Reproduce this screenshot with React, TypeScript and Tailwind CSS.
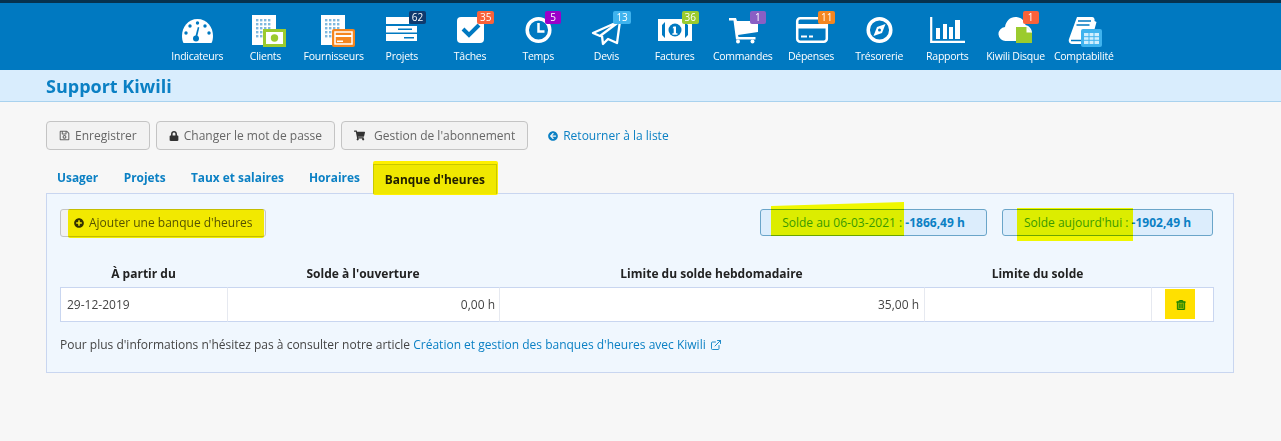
import { ReactNode } from 'react';
import { FaArrowCircleLeft, FaLock, FaPlusCircle, FaRegSave, FaShoppingCart, FaRegTrashAlt } from 'react-icons/fa';
import { ExternalLink } from 'lucide-react';

const Building = ({ children }: { children: ReactNode }) => (
  <svg width="36" height="36" viewBox="0 0 36 36" className="overflow-visible">
    <rect x="5" y="2" width="24" height="30" fill="#fff" />
    {[0, 1, 2, 3, 4].map((r) =>
      [0, 1, 2, 3].map((c) => (
        <rect key={`${r}-${c}`} x={9 + c * 4} y={6 + r * 4} width="2.4" height="2.4" fill="#7fb9df" />
      ))
    )}
    {children}
  </svg>
);

const icons: Record<string, ReactNode> = {
  gauge: (
    <svg width="36" height="36" viewBox="0 0 36 36">
      <path d="M18.500 6C9 6 3 14 3 23c0 2.500.4 5 1.500 7h28c1.100-2 1.500-4.500 1.500-7C34 14 28 6 18.500 6z" fill="#fff" />
      <g fill="#0079c1">
        <circle cx="18.500" cy="10" r="1.700" />
        <circle cx="11" cy="13" r="1.700" />
        <circle cx="26" cy="13" r="1.700" />
        <circle cx="7" cy="20" r="1.700" />
        <circle cx="30" cy="20" r="1.700" />
        <circle cx="17" cy="25.500" r="3" />
        <path d="M16 25l2.800-11 1.500.4-2.500 11z" />
      </g>
    </svg>
  ),
  clients: (
    <Building>
      <rect x="16" y="16" width="23" height="18" fill="#9bcb2e" />
      <rect x="19" y="19" width="17" height="12" fill="#fff" />
      <circle cx="27.500" cy="25" r="3.700" fill="#9bcb2e" />
    </Building>
  ),
  suppliers: (
    <Building>
      <rect x="16" y="16" width="23" height="18" rx="2" fill="#f5861f" />
      <rect x="19" y="19" width="17" height="12" fill="none" stroke="#fff" strokeWidth="1.500" />
      <rect x="19" y="22" width="17" height="2" fill="#fff" />
      <rect x="21" y="27.500" width="6" height="1.500" fill="#fff" />
    </Building>
  ),
  projects: (
    <svg width="36" height="36" viewBox="0 0 36 36">
      <path d="M2 4h23v7H2zM2 13h31v6.500H2zM2 21h31v7H2z" fill="#fff" />
      <path d="M14 15.500h14V17H14zM20 24h10v1.500H20z" fill="#0079c1" />
    </svg>
  ),
  tasks: (
    <svg width="36" height="36" viewBox="0 0 36 36">
      <rect x="5" y="4" width="27" height="26" rx="4" fill="#fff" />
      <path d="M11 16l6 6 10-10" fill="none" stroke="#0079c1" strokeWidth="4" />
    </svg>
  ),
  time: (
    <svg width="36" height="36" viewBox="0 0 36 36">
      <circle cx="18.500" cy="17" r="11.300" fill="none" stroke="#fff" strokeWidth="3.500" />
      <path d="M18.500 10v8.500h6" fill="none" stroke="#fff" strokeWidth="2.500" />
    </svg>
  ),
  quotes: (
    <svg width="36" height="36" viewBox="0 0 36 36">
      <path d="M32 8L5 20l7 3 20-15-3 22-9-4-5 5-1-8" fill="none" stroke="#fff" strokeWidth="2.300" strokeLinejoin="round" />
    </svg>
  ),
  invoices: (
    <svg width="36" height="36" viewBox="0 0 36 36">
      <path d="M1 6h34v22H1z" fill="#fff" />
      <path d="M5 12l3-3v16l-3-3zM31 12l-3-3v16l3-3z" fill="#0079c1" />
      <circle cx="18" cy="17" r="6.500" fill="#0079c1" />
      <path d="M16.500 13.500H19v6.800h1.400v1.500h-5v-1.500h1.300v-5H15.500z" fill="#fff" />
    </svg>
  ),
  orders: (
    <svg width="36" height="36" viewBox="0 0 36 36">
      <path d="M4 5h7l1 3h21v11l-20 3 .5 2h17v2.500H11L8.500 7.500H4z" fill="#fff" />
      <circle cx="13" cy="28.500" r="2" fill="#fff" />
      <circle cx="27.500" cy="28.500" r="2" fill="#fff" />
    </svg>
  ),
  expenses: (
    <svg width="36" height="36" viewBox="0 0 36 36">
      <rect x="4.200" y="5.200" width="29.600" height="23.600" rx="3" fill="none" stroke="#fff" strokeWidth="2.500" />
      <rect x="4" y="11" width="30" height="4.500" fill="#fff" />
      <path d="M8 22.500h6v2H8zM16 22.500h4v2h-4z" fill="#fff" />
    </svg>
  ),
  treasury: (
    <svg width="36" height="36" viewBox="0 0 36 36">
      <circle cx="18.500" cy="17" r="11.300" fill="none" stroke="#fff" strokeWidth="3.500" />
      <path d="M24.500 11l-3.500 9-8.500 3 3.500-9z" fill="#fff" />
      <circle cx="18.500" cy="17" r="1.500" fill="#0079c1" />
    </svg>
  ),
  reports: (
    <svg width="36" height="36" viewBox="0 0 36 36">
      <path d="M2.200 4v24.800H37" fill="none" stroke="#fff" strokeWidth="2.200" />
      <path d="M7 15h4v11H7zM14 11h4v15h-4zM20 14h4v12h-4zM26 7h5v19h-5z" fill="#fff" />
    </svg>
  ),
  drive: (
    <svg width="36" height="36" viewBox="0 0 36 36">
      <path d="M8 28a7 7 0 0 1-1-14C8 8 12 4 17.500 4c5 0 9 3 10 8 4 1 6.500 4 6.500 8s-3 8-7 8z" fill="#fff" />
      <path d="M18 14h10.500l5.500 5.500V30H18z" fill="#9bcb2e" />
      <path d="M28.500 14l5.500 5.500h-5.500z" fill="#fff" />
    </svg>
  ),
  accounting: (
    <svg width="36" height="36" viewBox="0 0 36 36" className="overflow-visible">
      <path d="M11 4h15c2 0 3 2 2.500 4l2 1-6 22H7c-3 0-5-2-4-5z" fill="#fff" />
      <path d="M12 8h13M10.500 12h13M5 27.500h11" stroke="#0079c1" strokeWidth="1.500" />
      <rect x="15" y="16" width="21" height="18" rx="2" fill="#3fb3ee" />
      <path d="M18 20h15v11H18z" fill="#cfeefe" />
      <path d="M23 20v11M28 20v11M18 23.700h15M18 27.300h15" stroke="#3fb3ee" strokeWidth="1" />
    </svg>
  ),
};

const navItems = [
  { label: 'Indicateurs', icon: 'gauge' },
  { label: 'Clients', icon: 'clients' },
  { label: 'Fournisseurs', icon: 'suppliers' },
  { label: 'Projets', icon: 'projects', badge: '62', color: 'bg-[#0f3a6e]' },
  { label: 'Tâches', icon: 'tasks', badge: '35', color: 'bg-[#f9623a]' },
  { label: 'Temps', icon: 'time', badge: '5', color: 'bg-[#9b00c9]' },
  { label: 'Devis', icon: 'quotes', badge: '13', color: 'bg-[#3fb3ee]' },
  { label: 'Factures', icon: 'invoices', badge: '36', color: 'bg-[#9bcb2e]' },
  { label: 'Commandes', icon: 'orders', badge: '1', color: 'bg-[#8a5fc4]' },
  { label: 'Dépenses', icon: 'expenses', badge: '11', color: 'bg-[#f5861f]' },
  { label: 'Trésorerie', icon: 'treasury' },
  { label: 'Rapports', icon: 'reports' },
  { label: 'Kiwili Disque', icon: 'drive', badge: '1', color: 'bg-[#f9623a]' },
  { label: 'Comptabilité', icon: 'accounting' },
];

const Highlight = ({ className }: { className: string }) => (
  <span className={`absolute mix-blend-multiply pointer-events-none ${className}`} />
);

const ActionButton = ({ icon, label }: { icon: ReactNode; label: string }) => (
  <button className="h-[29px] px-[12px] flex items-center gap-[5px] bg-[#f2f2f2] border border-[#c4c4c4] rounded-[4px] text-[12px] text-[#666]">
    {icon}
    {label}
  </button>
);

export default function App() {
  return (
    <div className="w-[1281px] h-[441px] overflow-hidden bg-[#f7f7f7] text-[12px] text-[#444] font-['Open_Sans',sans-serif]">
      {/* top navigation */}
      <div className="h-[70px] bg-[#0079c1] border-t-[3px] border-[#06324f] flex justify-center">
        {navItems.map((item) => (
          <div key={item.label} className="w-[68.2px] shrink-0 flex flex-col items-center pt-[10px] relative">
            <div className="relative h-[36px] w-[36px]">
              {icons[item.icon]}
              {item.badge && (
                <span className={`absolute top-[-2px] left-[25px] min-w-[16px] h-[13px] px-[3px] rounded-[2px] flex items-center justify-center text-[10px] text-white ${item.color}`}>
                  {item.badge}
                </span>
              )}
            </div>
            <span className="text-[10.500px] leading-[14px] text-white whitespace-nowrap tracking-[-0.25px]">{item.label}</span>
          </div>
        ))}
      </div>

      {/* page title */}
      <div className="h-[32px] bg-[#d9edfd] border-b border-[#a9d2ee] pl-[46px] flex items-center">
        <h1 className="text-[18px] leading-[32px] font-bold text-[#0b80c4]">Support Kiwili</h1>
      </div>

      <div className="px-[46px] pr-[47px] pt-[19px]">
        <div className="flex items-center gap-[6px]">
          <ActionButton icon={<FaRegSave className="text-[11px] text-[#666]" />} label="Enregistrer" />
          <ActionButton icon={<FaLock className="text-[10px] text-[#333]" />} label="Changer le mot de passe" />
          <ActionButton icon={<FaShoppingCart className="text-[11px] text-[#333] mr-[4px]" />} label="Gestion de l'abonnement" />
          <a className="ml-[14px] flex items-center gap-[5px] text-[12px] text-[#0b80c4]">
            <FaArrowCircleLeft className="text-[10px]" />
            Retourner à la liste
          </a>
        </div>

        {/* tabs */}
        <div className="mt-[13px] flex h-[30px] items-end font-bold text-[11.900px] text-[#0b80c4] relative z-10">
          <span className="h-[30px] px-[11px] flex items-center mr-[3.500px]">Usager</span>
          <span className="h-[30px] px-[11px] flex items-center mr-[3.200px]">Projets</span>
          <span className="h-[30px] px-[11px] flex items-center mr-[3px]">Taux et salaires</span>
          <span className="h-[30px] px-[11px] flex items-center mr-[2px]">Horaires</span>
          <span className="relative h-[30px] mb-[-1px] w-[124px] justify-center flex items-center bg-[#f0f7fe] border border-b-0 border-[#c9d6f0] text-[#222]">
            Banque d'heures
            <Highlight className="bg-[#fff000] left-[-1px] top-[-4px] w-[125px] h-[34px] rounded-[2px]" />
          </span>
        </div>

        {/* panel */}
        <div className="h-[180px] bg-[#f0f7fe] border border-[#c9d6f0] px-[13px] pt-[15px]">
          <div className="flex items-start">
            <button className="relative h-[28px] w-[206px] flex items-center gap-[5px] pl-[13px] bg-[#f2f2f2] border border-[#c4c4c4] rounded-[3px] text-[12px] text-[#555]">
              <FaPlusCircle className="text-[10px] text-[#333]" />
              Ajouter une banque d'heures
              <Highlight className="bg-[#fff600] left-[7px] top-[-1px] w-[196px] h-[29px] rounded-[2px]" />
            </button>
            <div className="relative ml-auto w-[227px] h-[27px] flex items-center justify-center bg-[#dcedfc] border border-[#6aa5c9] rounded-[3px] text-[12px] text-[#3a9ad0]">
              <span>Solde au 06-03-2021 :&nbsp;</span>
              <b className="text-[#0b80c4]">-1866,49 h</b>
              <Highlight className="bg-[#ffff00] left-[10px] top-[-8px] w-[133px] h-[34px] [clip-path:polygon(0_12%,100%_0,100%_100%,0_100%)]" />
            </div>
            <div className="relative ml-[15px] mr-[7px] w-[211px] h-[27px] flex items-center justify-center bg-[#dcedfc] border border-[#6aa5c9] rounded-[3px] text-[12px] text-[#3a9ad0]">
              <span>Solde aujourd'hui :&nbsp;</span>
              <b className="text-[#0b80c4]">-1902,49 h</b>
              <Highlight className="bg-[#ffff00] left-[14px] top-[-2px] w-[116px] h-[33px]" />
            </div>
          </div>

          <div className="mt-[23px] mr-[6px] grid grid-cols-[167px_272px_425px_227px_1fr] text-[12px]">
            <div className="h-[27px] flex items-center justify-center font-bold text-[#222]">À partir du</div>
            <div className="h-[27px] flex items-center justify-center font-bold text-[#222]">Solde à l'ouverture</div>
            <div className="h-[27px] flex items-center justify-center font-bold text-[#222]">Limite du solde hebdomadaire</div>
            <div className="h-[27px] flex items-center justify-center font-bold text-[#222]">Limite du solde</div>
            <div className="h-[27px]" />
            <div className="h-[35px] bg-white border-y border-l border-[#c9d6f0] pl-[6px] flex items-center">29-12-2019</div>
            <div className="h-[35px] bg-white border-y border-l border-y-[#c9d6f0] border-l-[#e6e9f0] pr-[4px] flex items-center justify-end">0,00 h</div>
            <div className="h-[35px] bg-white border-y border-l border-y-[#c9d6f0] border-l-[#e6e9f0] pr-[5px] flex items-center justify-end">35,00 h</div>
            <div className="h-[35px] bg-white border-y border-l border-y-[#c9d6f0] border-l-[#e6e9f0]" />
            <div className="relative h-[35px] bg-white border border-[#c9d6f0] border-l-[#e6e9f0] flex items-center justify-center pr-[4px]">
              <FaRegTrashAlt className="text-[10px] text-[#149400] stroke-[#149400] stroke-[30]" />
              <Highlight className="bg-[#ffe000] left-[13px] top-[1px] w-[30px] h-[30px]" />
            </div>
          </div>

          <p className="mt-[14px] text-[12px] text-[#444] flex items-center">
            Pour plus d'informations n'hésitez pas à consulter notre article&nbsp;
            <a className="text-[#0b80c4]">Création et gestion des banques d'heures avec Kiwili</a>
            <ExternalLink size={12} strokeWidth={1.800} className="ml-[4px] text-[#0b80c4]" />
          </p>
        </div>
      </div>
    </div>
  );
}
